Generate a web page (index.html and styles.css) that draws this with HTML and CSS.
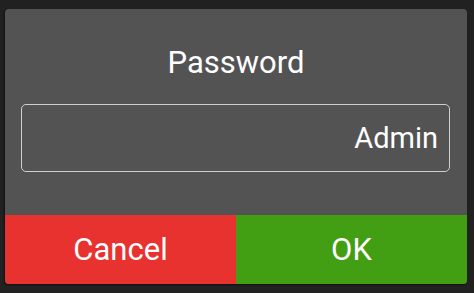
FILE: index.html
```html
<!DOCTYPE html>
<html>
<head>
<meta charset="utf-8">
<link rel="stylesheet" href="styles.css">
</head>
<body>
<div class="dialog">
  <div class="title">Password</div>
  <div class="field"><span class="value">Admin</span></div>
  <div class="actions">
    <div class="btn cancel">Cancel</div>
    <div class="btn ok">OK</div>
  </div>
</div>
</body>
</html>
```
FILE: styles.css
```css
html, body {
  margin: 0;
  background: #212121;
}
body {
  padding: 9px 7px 9px 5px;
  font-family: Roboto, "Noto Sans", sans-serif;
  color: #fff;
}
.dialog {
  width: 462px;
  height: 275px;
  background: #545353;
  border-radius: 4px;
  overflow: hidden;
  display: flex;
  flex-direction: column;
  box-shadow: -1px 1px 2px rgba(0,0,0,0.5);
}
.title {
  padding-top: 36px;
  font-size: 31px;
  line-height: 36px;
  text-align: center;
}
.field {
  margin: 23px 17px 0 16px;
  height: 68px;
  box-sizing: border-box;
  border: 1.5px solid #cfcfcf;
  border-radius: 5px;
  display: flex;
  align-items: center;
  justify-content: flex-end;
  padding-right: 11px;
  font-size: 29px;
}
.actions {
  margin-top: auto;
  height: 69px;
  display: flex;
}
.btn {
  flex: 1;
  display: flex;
  align-items: center;
  justify-content: center;
  font-size: 31px;
}
.cancel { background: #e8322f; }
.ok { background: #429e12; }
```
